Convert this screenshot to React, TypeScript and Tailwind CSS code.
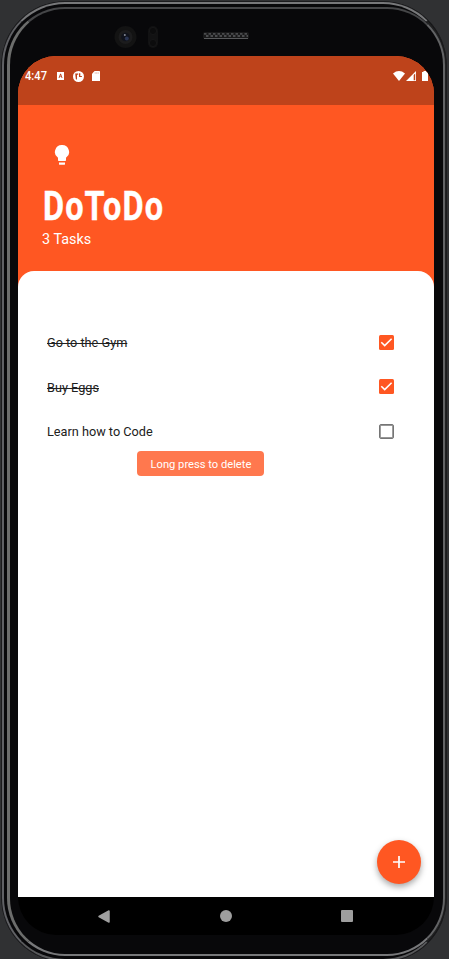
import type { ReactNode } from "react";

function StatusBar() {
  return (
    <div className="flex h-[49px] shrink-0 items-start justify-between bg-[#be431b] pt-[13px] pl-[6.5px] text-white">
      <div className="flex h-[14px] items-center">
        <span className="w-[32.5px] origin-left scale-x-[0.93] text-[12px] leading-[14px] font-medium whitespace-nowrap">4:47</span>
        <svg width="7" height="8" viewBox="0 0 7 8">
          <path fill="#fff" fillRule="evenodd" d="M0 0h7v8H0zM3.1 1.7 1.6 6h.9l.3-.9h1.5l.3.9h.9L4 1.7zM3.5 2.9l.5 1.5H3z" />
        </svg>
        <svg className="ml-[9px]" width="11" height="11" viewBox="0 0 11 11">
          <circle cx="5.5" cy="5.5" r="5.5" fill="#fff" />
          <path fill="#be431b" d="M2.2 2.5h3V3.7H4v5.1L2.8 8zM6 2.2h1.3v3.8H6z" />
          <path fill="#be431b" d="M7 4.9h1.9V6H7z" />
        </svg>
        <svg className="ml-[8px]" width="8" height="10" viewBox="0 0 8 10">
          <path fill="#fff" d="M2.6 0H7.4Q8 0 8 .6v8.8q0 .6-.6.6H.6Q0 10 0 9.4V2.7z" />
          <path stroke="#be431b" strokeOpacity=".5" strokeWidth=".6" d="M3.2 1.2v1.7M4.7 1.2v1.7M6.2 1.2v1.7" />
        </svg>
      </div>
      <div className="mr-[6px] flex h-[14px] items-center">
        <svg width="12" height="10" viewBox="0 0 12 10">
          <path fill="#fff" d="M0 2.4Q6-2.2 12 2.4L6 10z" />
        </svg>
        <svg className="ml-px" width="10" height="10" viewBox="0 0 10 10">
          <path fill="#fff" fillRule="evenodd" d="M10 0v10H0zM9.2 2.4 7.7 3.9v5.3h1.5z" />
        </svg>
        <svg className="ml-[6px]" width="6" height="10" viewBox="0 0 6 10">
          <path fill="#fff" d="M1.5 0h3v1H6v8.5q0 .5-.5.5h-5Q0 10 0 9.5V1h1.5z" />
        </svg>
      </div>
    </div>
  );
}

function Checkbox({ checked }: { checked: boolean }) {
  if (!checked) {
    return <span className="size-[15px] rounded-[2px] border border-[#757575] shadow-[inset_0_0_0_0.7px_#757575]" />;
  }
  return (
    <span className="size-[15px] rounded-[1.5px] bg-[#ff5722]">
      <svg width="15" height="15" viewBox="0 0 15 15">
        <path d="M2.3 7.3 5.7 10.6 12.6 3.8" fill="none" stroke="#fff" strokeWidth="1.6" />
      </svg>
    </span>
  );
}

const tasks = [
  { name: "Go to the Gym", done: true },
  { name: "Buy Eggs", done: true },
  { name: "Learn how to Code", done: false },
];

function TaskList() {
  return (
    <div className="pt-[49.5px] pr-10 pl-[29px]">
      {tasks.map((task) => (
        <div key={task.name} className="flex h-[44.5px] items-center justify-between text-[13.3px] text-[#212121]">
          <span className={task.done ? "origin-left scale-x-[0.955] pt-[1.5px] line-through decoration-1" : "origin-left scale-x-[0.955] pt-[1.5px]"}>
            {task.name}
          </span>
          <Checkbox checked={task.done} />
        </div>
      ))}
    </div>
  );
}

function Camera() {
  return (
    <div className="flex h-[47px] shrink-0 items-start">
      <svg className="mt-[17px] ml-[104px]" width="46" height="23" viewBox="0 0 46 23">
        <circle cx="11.5" cy="11" r="11" fill="#131313" />
        <circle cx="11.5" cy="11" r="7" fill="#1c1c1d" />
        <circle cx="11.5" cy="11" r="4.3" fill="#10131c" />
        <circle cx="12.8" cy="12.5" r="2" fill="#293451" />
        <circle cx="10.8" cy="9" r="1" fill="#858994" />
        <rect x="34" y="0" width="10" height="22" rx="5" fill="#121213" />
        <circle cx="39" cy="5" r="3.6" fill="#0c0c0d" stroke="#161617" />
        <circle cx="39" cy="17" r="3.6" fill="#0c0c0d" stroke="#161617" />
      </svg>
      <svg className="mt-[23px] ml-[43px]" width="46" height="8" viewBox="0 0 46 8">
        <rect width="46" height="7" rx="2" fill="#19191a" />
        <path d="M1 1.8h44" stroke="#4a4b4d" strokeWidth="1.8" strokeDasharray="2.5 2" />
        <path d="M3 4h42" stroke="#4a4b4d" strokeWidth="1.8" strokeDasharray="2.5 2" />
        <path d="M1 6.5h44" stroke="#58595b" strokeWidth="1" />
      </svg>
    </div>
  );
}

function NavBar() {
  return (
    <div className="flex h-[38px] shrink-0 items-center rounded-b-[38px] bg-black">
      <svg className="ml-[80px]" width="12" height="13" viewBox="0 0 12 13">
        <path d="M11 1v11L1 6.5z" fill="#a0a0a0" stroke="#a0a0a0" strokeWidth="1.5" strokeLinejoin="round" />
      </svg>
      <span className="ml-[110px] size-[12px] rounded-full bg-[#9e9e9e]" />
      <span className="ml-[109px] size-[12px] rounded-[1px] bg-[#9e9e9e]" />
    </div>
  );
}

function PhoneFrame({ children }: { children: ReactNode }) {
  return (
    <div className="h-[959px] w-[449px] overflow-hidden bg-[#303133] font-[Roboto,sans-serif]">
      <div className="h-full pt-px pl-px">
        <div className="h-[961px] w-[446px] rounded-[64px] border border-[#1b1b1d] bg-[#08080a]">
          <div className="h-[959px] w-[444px] rounded-[63px] border-2 border-t-[#77787a] border-r-[#202122] border-b-[#58595b] border-l-[#606165] p-[3px] pr-px pb-[1px]">
            <div className="h-[949px] w-[438px] rounded-[58px] border-t-2 border-r-2 border-b-2 border-l-3 border-t-[#454648] border-r-[#626365] border-b-[#77787a] border-l-[#6c6d6c] bg-[#08080a]">
              <div className="flex flex-col">
                <Camera />
                {children}
              </div>
            </div>
          </div>
        </div>
      </div>
    </div>
  );
}

export default function App() {
  return (
    <PhoneFrame>
      <div className="ml-[8px] flex h-[879px] w-[416px] flex-col">
        <div className="flex min-h-0 flex-1 flex-col overflow-hidden rounded-t-[38px] bg-[#ff5722]">
          <StatusBar />
          <header className="h-[165.7px] shrink-0 px-6 pt-[40px] text-white">
            <svg className="ml-[12px]" width="16" height="21" viewBox="0 0 16 21">
              <path fill="#fff" d="M8 0a7 7 0 0 0-4 12.8v2.4q0 .8.8.8h6.4q.8 0 .8-.8v-2.4A7 7 0 0 0 8 0zM5 17.6h6v1.3q0 .9-.9.9H5.9q-.9 0-.9-.9z" />
            </svg>
            <h1 className="mt-[17px] ml-[0.5px] w-max origin-left scale-x-[0.81] text-[40px] leading-[47px] font-bold tracking-[1.4px] [-webkit-text-stroke:0.4px_white]">DoToDo</h1>
            <p className="w-max origin-left scale-x-[0.96] text-[15px] leading-[18px]">3 Tasks</p>
          </header>
          <main className="relative min-h-0 flex-1 rounded-t-[16px] bg-white">
            <TaskList />
            <div className="absolute top-[180.3px] left-[119px] flex h-[25px] w-[127px] items-center justify-center rounded-[4px] bg-[#ff784e] whitespace-nowrap text-white">
              <span className="scale-x-[0.97] pt-px text-[11.5px] leading-[16px]">Long press to delete</span>
            </div>
            <button className="absolute right-[13px] bottom-[13px] flex size-[44px] items-center justify-center rounded-full bg-[#ff5722] shadow-[0_3px_6px_rgba(0,0,0,0.35)]">
              <svg width="12" height="12" viewBox="0 0 12 12">
                <path d="M6 0v12M0 6h12" stroke="#fff" strokeWidth="1.7" />
              </svg>
            </button>
          </main>
        </div>
        <NavBar />
      </div>
    </PhoneFrame>
  );
}
